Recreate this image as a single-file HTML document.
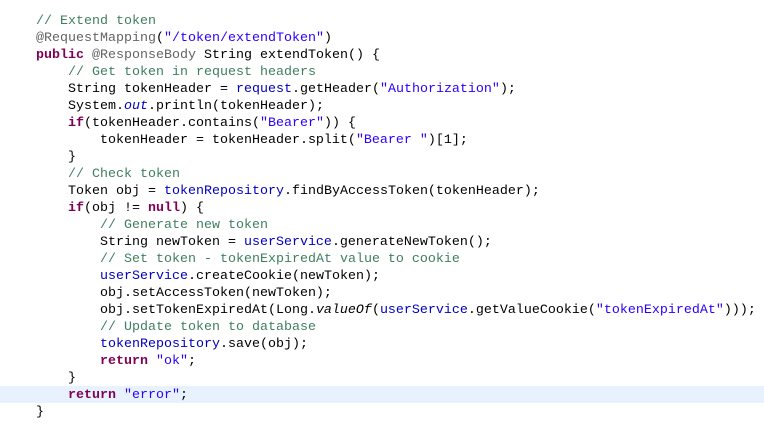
<!DOCTYPE html>
<html><head><meta charset="utf-8"><style>
html,body{margin:0;padding:0;background:#fff;width:764px;height:426px;overflow:hidden;position:relative}
.hl{position:absolute;left:0;top:386px;width:764px;height:17px;background:#e8f2fe}
pre{position:absolute;left:36px;top:13px;margin:0;font-family:"Liberation Mono","Courier New",monospace;font-size:13.33px;line-height:17px;color:#000}
.c{color:#3f7f5f}.k{color:#7f0055;font-weight:bold}.a{color:#646464}.s{color:#2a00ff}.f{color:#0000c0}.i{font-style:italic}
</style></head><body>
<div class="hl"></div>
<pre><span class="c">// Extend token</span>
<span class="a">@RequestMapping</span>(<span class="s">"/token/extendToken"</span>)
<span class="k">public</span> <span class="a">@ResponseBody</span> String extendToken() {
    <span class="c">// Get token in request headers</span>
    String tokenHeader = <span class="f">request</span>.getHeader(<span class="s">"Authorization"</span>);
    System.<span class="f i">out</span>.println(tokenHeader);
    <span class="k">if</span>(tokenHeader.contains(<span class="s">"Bearer"</span>)) {
        tokenHeader = tokenHeader.split(<span class="s">"Bearer "</span>)[1];
    }
    <span class="c">// Check token</span>
    Token obj = <span class="f">tokenRepository</span>.findByAccessToken(tokenHeader);
    <span class="k">if</span>(obj != <span class="k">null</span>) {
        <span class="c">// Generate new token</span>
        String newToken = <span class="f">userService</span>.generateNewToken();
        <span class="c">// Set token - tokenExpiredAt value to cookie</span>
        <span class="f">userService</span>.createCookie(newToken);
        obj.setAccessToken(newToken);
        obj.setTokenExpiredAt(Long.<span class="i">valueOf</span>(<span class="f">userService</span>.getValueCookie(<span class="s">"tokenExpiredAt"</span>)));
        <span class="c">// Update token to database</span>
        <span class="f">tokenRepository</span>.save(obj);
        <span class="k">return</span> <span class="s">"ok"</span>;
    }
    <span class="k">return</span> <span class="s">"error"</span>;
}</pre>
</body></html>
